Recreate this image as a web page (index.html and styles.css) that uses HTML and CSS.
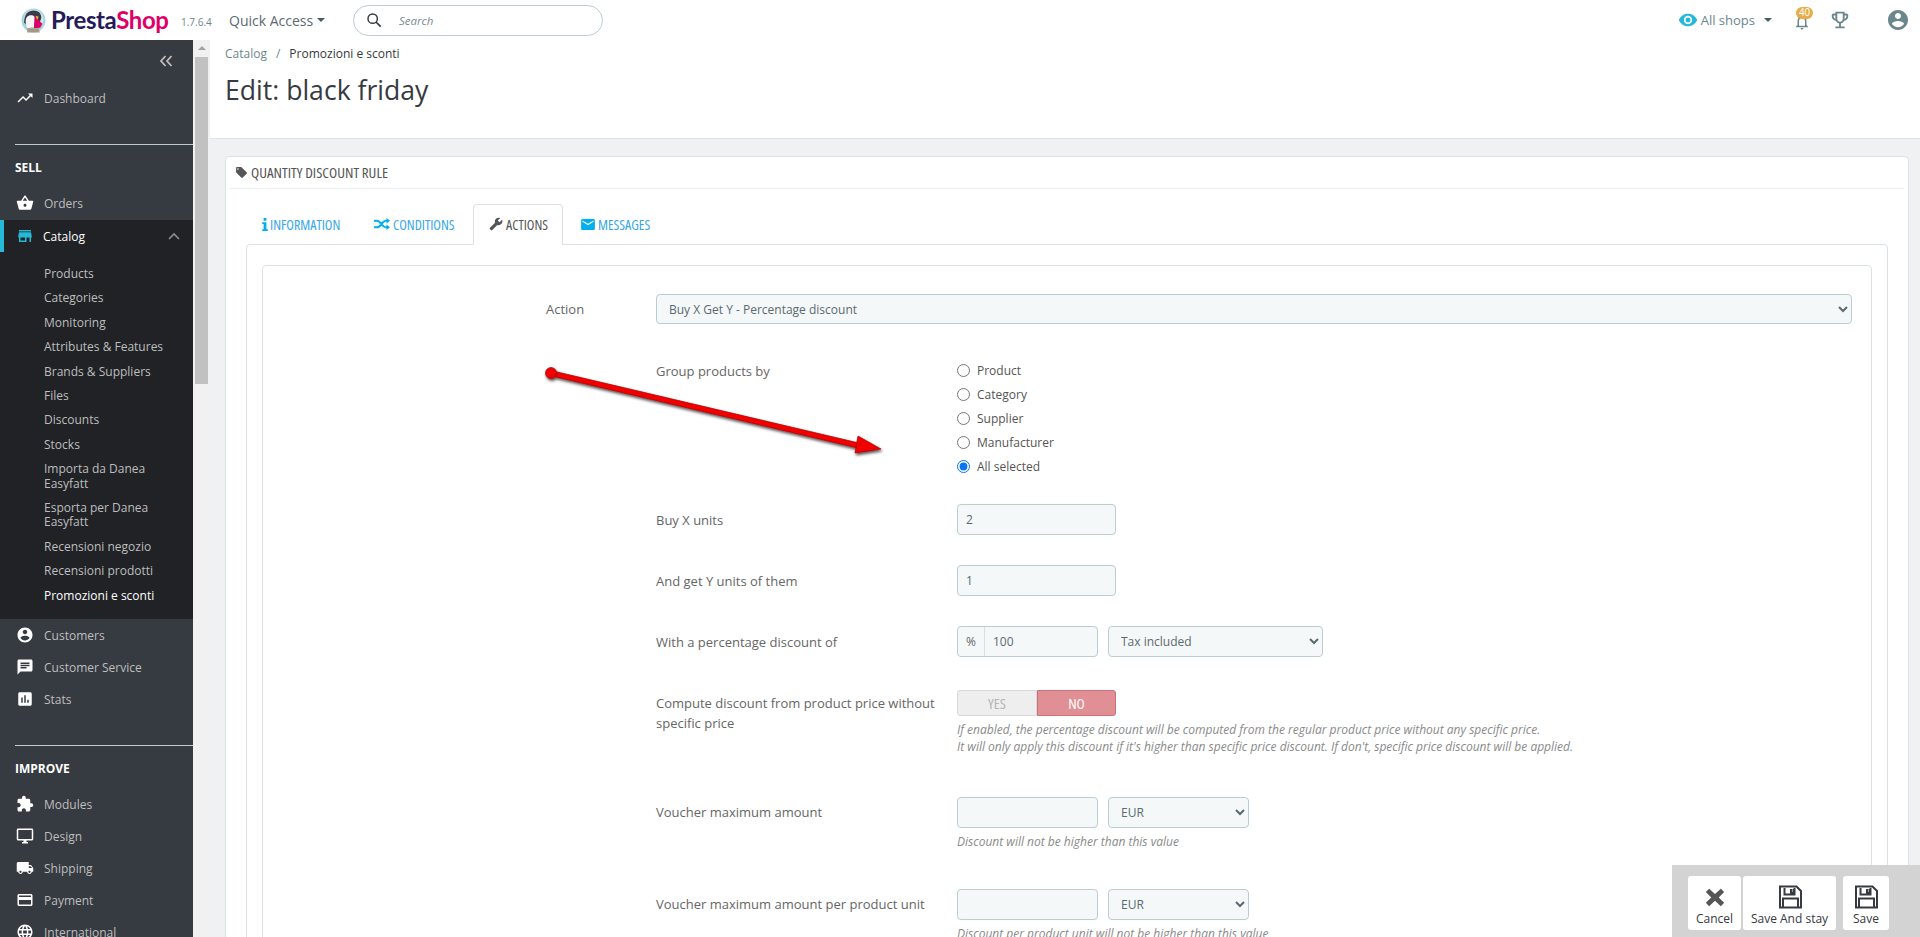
FILE: index.html
```html
<!DOCTYPE html>
<html lang="en">
<head>
    <meta charset="UTF-8">
    <meta name="viewport" content="width=device-width, initial-scale=1.0">
    <title>Edit: black friday</title>
    <link rel="stylesheet" href="styles.css">
</head>
<body>

<header class="topbar">
    <div class="logo">
        <svg class="logo-bird" viewBox="0 0 24 24">
            <circle cx="12" cy="12" r="11.500" fill="#a3d6e2"/>
            <circle cx="12" cy="11" r="9.500" fill="#d3e8ec"/>
            <path d="M3 14C3 6 7 2.500 12 2.500c5 0 7.500 3 7.500 7l-3 8-9 2z" fill="#3a3b48"/>
            <path d="M4.500 13c0-4 2-6 5-6 3 0 4.500 2 4 4.500l-1 7-6 1c-1.500-2-2-4-2-6.500z" fill="#f6f6f6"/>
            <path d="M13 8l7.500 7-2 4-6 .500z" fill="#df0067"/>
            <path d="M14 7.500l3 1-1.500 3z" fill="#f5b335"/>
            <path d="M6 19.500h11l1 4H6z" fill="#a39a84"/>
        </svg>
        <span class="logo-name"><span class="logo-presta">Presta</span><span class="logo-shop">Shop</span></span>
    </div>
    <span class="version">1.7.6.4</span>
    <span class="quick-access">Quick Access<i class="caret"></i></span>
    <div class="search">
        <svg class="search-icon" viewBox="0 0 24 24"><circle cx="10" cy="10" r="7" fill="none" stroke="#363a41" stroke-width="2.2"/><path d="M15 15l7 7" stroke="#363a41" stroke-width="2.6"/></svg>
        <span class="search-text">Search</span>
    </div>
    <div class="topbar-right">
        <svg class="eye" viewBox="0 0 24 24"><path d="M12 4.5C7 4.5 2.73 7.61 1 12c1.73 4.39 6 7.5 11 7.5s9.27-3.11 11-7.5c-1.73-4.39-6-7.5-11-7.5zM12 17c-2.76 0-5-2.24-5-5s2.24-5 5-5 5 2.24 5 5-2.24 5-5 5zm0-8c-1.66 0-3 1.34-3 3s1.34 3 3 3 3-1.34 3-3-1.34-3-3-3z"/></svg>
        <span class="shops">All shops</span>
        <i class="caret caret-shops"></i>
        <div class="bell">
            <svg viewBox="0 0 24 24"><path d="M12 22c1.1 0 2-.9 2-2h-4c0 1.1.9 2 2 2zm6-6v-5c0-3.07-1.63-5.64-4.5-6.32V4c0-.83-.67-1.5-1.5-1.5s-1.5.67-1.5 1.5v.68C7.64 5.36 6 7.92 6 11v5l-2 2v1h16v-1l-2-2zm-2 1H8v-6c0-2.48 1.51-4.5 4-4.5s4 2.02 4 4.5v6z"/></svg>
            <span class="badge">40</span>
        </div>
        <svg class="trophy" viewBox="0 0 24 24"><path d="M19 5h-2V3H7v2H5c-1.1 0-2 .9-2 2v1c0 2.55 1.92 4.63 4.39 4.94.63 1.5 1.98 2.63 3.61 2.96V19H7v2h10v-2h-4v-3.1c1.63-.33 2.98-1.46 3.61-2.96C19.08 12.63 21 10.55 21 8V7c0-1.1-.9-2-2-2zM5 8V7h2v3.82C5.84 10.4 5 9.3 5 8zm7 6c-1.65 0-3-1.35-3-3V5h6v6c0 1.65-1.35 3-3 3zm7-6c0 1.3-.84 2.4-2 2.82V7h2v1z"/></svg>
        <svg class="user" viewBox="2 2 20 20"><path d="M12 2C6.48 2 2 6.48 2 12s4.48 10 10 10 10-4.48 10-10S17.52 2 12 2zm0 3c1.66 0 3 1.34 3 3s-1.34 3-3 3-3-1.34-3-3 1.34-3 3-3zm0 14.2c-2.5 0-4.71-1.28-6-3.22.03-1.99 4-3.08 6-3.08 1.99 0 5.97 1.09 6 3.08-1.29 1.94-3.5 3.22-6 3.22z"/></svg>
    </div>
</header>

<div class="app">
    <nav class="sidebar">
        <div class="collapse">
            <svg viewBox="0 0 14 12"><path d="M6.500 1L2 6l4.500 5M12.500 1L8 6l4.500 5" fill="none" stroke="#bebebe" stroke-width="1.800"/></svg>
        </div>
        <a class="nav-item nav-dashboard">
            <svg viewBox="0 0 24 24"><path d="M16 6l2.29 2.29-4.88 4.88-4-4L2 16.59 3.41 18l6-6 4 4 6.3-6.29L22 12V6z"/></svg>
            Dashboard
        </a>
        <div class="nav-title">SELL</div>
        <a class="nav-item">
            <svg viewBox="0 0 24 24"><path d="M17.21 9l-4.38-6.56c-.19-.28-.51-.42-.83-.42-.32 0-.64.14-.83.43L6.79 9H2c-.55 0-1 .45-1 1 0 .09.01.18.04.27l2.54 9.27c.23.84 1 1.46 1.92 1.46h13c.92 0 1.69-.62 1.93-1.46l2.54-9.27L23 10c0-.55-.45-1-1-1h-4.79zM9 9l3-4.4L15 9H9zm3 8c-1.1 0-2-.9-2-2s.9-2 2-2 2 .9 2 2-.9 2-2 2z"/></svg>
            Orders
        </a>
        <div class="nav-open">
            <a class="nav-item nav-active">
                <svg viewBox="0 0 24 24"><path d="M20 4H4v2h16V4zm1 10v-2l-1-5H4l-1 5v2h1v6h10v-6h4v6h2v-6h1zm-9 4H6v-4h6v4z"/></svg>
                Catalog
                <svg class="nav-chevron" viewBox="0 0 12 8"><path d="M1 7l5-5 5 5" fill="none" stroke="#8a8d92" stroke-width="1.6"/></svg>
            </a>
            <ul class="submenu">
                <li>Products</li>
                <li>Categories</li>
                <li>Monitoring</li>
                <li>Attributes &amp; Features</li>
                <li>Brands &amp; Suppliers</li>
                <li>Files</li>
                <li>Discounts</li>
                <li>Stocks</li>
                <li>Importa da Danea Easyfatt</li>
                <li>Esporta per Danea Easyfatt</li>
                <li>Recensioni negozio</li>
                <li>Recensioni prodotti</li>
                <li class="current">Promozioni e sconti</li>
            </ul>
        </div>
        <a class="nav-item">
            <svg viewBox="0 0 24 24"><path d="M12 2C6.48 2 2 6.48 2 12s4.48 10 10 10 10-4.48 10-10S17.52 2 12 2zm0 3c1.66 0 3 1.34 3 3s-1.34 3-3 3-3-1.34-3-3 1.34-3 3-3zm0 14.2c-2.5 0-4.71-1.28-6-3.22.03-1.99 4-3.08 6-3.08 1.99 0 5.97 1.09 6 3.08-1.29 1.94-3.5 3.22-6 3.22z"/></svg>
            Customers
        </a>
        <a class="nav-item">
            <svg viewBox="0 0 24 24"><path d="M20 2H4c-1.1 0-1.99.9-1.99 2L2 22l4-4h14c1.1 0 2-.9 2-2V4c0-1.1-.9-2-2-2zM6 9h12v2H6V9zm8 5H6v-2h8v2zm4-6H6V6h12v2z"/></svg>
            Customer Service
        </a>
        <a class="nav-item">
            <svg viewBox="0 0 24 24"><path d="M19 3H5c-1.1 0-2 .9-2 2v14c0 1.1.9 2 2 2h14c1.1 0 2-.9 2-2V5c0-1.1-.9-2-2-2zM9 17H7v-7h2v7zm4 0h-2V7h2v10zm4 0h-2v-4h2v4z"/></svg>
            Stats
        </a>
        <div class="nav-title nav-title-second">IMPROVE</div>
        <a class="nav-item">
            <svg viewBox="0 0 24 24"><path d="M20.5 11H19V7c0-1.1-.9-2-2-2h-4V3.5C13 2.12 11.88 1 10.5 1S8 2.12 8 3.5V5H4c-1.1 0-1.99.9-1.99 2v3.8H3.5c1.49 0 2.7 1.21 2.7 2.7s-1.21 2.7-2.7 2.7H2V20c0 1.1.9 2 2 2h3.8v-1.5c0-1.49 1.21-2.7 2.7-2.7 1.49 0 2.7 1.21 2.7 2.7V22H17c1.1 0 2-.9 2-2v-4h1.5c1.38 0 2.5-1.12 2.5-2.5S21.88 11 20.5 11z"/></svg>
            Modules
        </a>
        <a class="nav-item">
            <svg viewBox="0 0 24 24"><path d="M21 2H3c-1.1 0-2 .9-2 2v12c0 1.1.9 2 2 2h7v2H8v2h8v-2h-2v-2h7c1.1 0 2-.9 2-2V4c0-1.1-.9-2-2-2zm0 14H3V4h18v12z"/></svg>
            Design
        </a>
        <a class="nav-item">
            <svg viewBox="0 0 24 24"><path d="M20 8h-3V4H3c-1.1 0-2 .9-2 2v11h2c0 1.66 1.34 3 3 3s3-1.34 3-3h6c0 1.66 1.34 3 3 3s3-1.34 3-3h2v-5l-3-4zM6 18.5c-.83 0-1.5-.67-1.5-1.5s.67-1.5 1.5-1.5 1.5.67 1.5 1.5-.67 1.5-1.5 1.5zm13.5-9l1.96 2.5H17V9.5h2.5zm-1.5 9c-.83 0-1.5-.67-1.5-1.5s.67-1.5 1.5-1.5 1.5.67 1.5 1.5-.67 1.5-1.5 1.5z"/></svg>
            Shipping
        </a>
        <a class="nav-item">
            <svg viewBox="0 0 24 24"><path d="M20 4H4c-1.11 0-1.99.89-1.99 2L2 18c0 1.11.89 2 2 2h16c1.11 0 2-.89 2-2V6c0-1.11-.89-2-2-2zm0 14H4v-6h16v6zm0-10H4V6h16v2z"/></svg>
            Payment
        </a>
        <a class="nav-item">
            <svg viewBox="0 0 24 24"><path d="M11.99 2C6.47 2 2 6.48 2 12s4.47 10 9.99 10C17.52 22 22 17.52 22 12S17.52 2 11.99 2zm6.93 6h-2.95c-.32-1.25-.78-2.45-1.38-3.56 1.84.63 3.37 1.91 4.33 3.56zM12 4.04c.83 1.2 1.48 2.53 1.91 3.96h-3.82c.43-1.43 1.08-2.76 1.91-3.96zM4.26 14C4.1 13.36 4 12.69 4 12s.1-1.36.26-2h3.38c-.08.66-.14 1.32-.14 2 0 .68.06 1.34.14 2H4.26zm.82 2h2.95c.32 1.25.78 2.45 1.38 3.56-1.84-.63-3.37-1.9-4.33-3.56zm2.95-8H5.08c.96-1.66 2.49-2.93 4.33-3.56C8.81 5.55 8.35 6.75 8.03 8zM12 19.96c-.83-1.2-1.48-2.53-1.91-3.96h3.82c-.43 1.43-1.08 2.76-1.91 3.96zM14.34 14H9.66c-.09-.66-.16-1.32-.16-2 0-.68.07-1.35.16-2h4.68c.09.65.16 1.32.16 2 0 .68-.07 1.34-.16 2zm.25 5.56c.6-1.11 1.06-2.31 1.38-3.56h2.95c-.96 1.65-2.49 2.93-4.33 3.56zM16.36 14c.08-.66.14-1.32.14-2 0-.68-.06-1.34-.14-2h3.38c.16.64.26 1.31.26 2s-.1 1.36-.26 2h-3.38z"/></svg>
            International
        </a>
    </nav>

    <div class="scroll-track">
        <i class="scroll-arrow"></i>
        <div class="scroll-thumb"></div>
    </div>

    <main class="content">
        <div class="page-head">
            <div class="breadcrumb"><span class="crumb">Catalog</span><span class="crumb-sep">/</span><span>Promozioni e sconti</span></div>
            <h1>Edit: black friday</h1>
        </div>

        <section class="card">
            <div class="card-head">
                <svg viewBox="0 0 24 24"><path d="M21.41 11.58l-9-9C12.05 2.22 11.55 2 11 2H4c-1.1 0-2 .9-2 2v7c0 .55.22 1.05.59 1.42l9 9c.36.36.86.58 1.41.58.55 0 1.05-.22 1.41-.59l7-7c.37-.36.59-.86.59-1.41 0-.55-.23-1.06-.59-1.42zM5.5 7C4.67 7 4 6.33 4 5.5S4.67 4 5.5 4 7 4.67 7 5.5 6.33 7 5.5 7z"/></svg>
                QUANTITY DISCOUNT RULE
            </div>

            <div class="tabs">
                <a class="tab tab-info">
                    <svg viewBox="0 0 6 14"><path d="M1.5 0h3v3h-3zM0 4.500h4.500V12H6v2H0v-2h1.500V6.500H0z"/></svg>
                    INFORMATION
                </a>
                <a class="tab tab-cond">
                    <svg viewBox="0 0 16 12"><path d="M0 2.700h3c4 0 5 6.600 8.500 6.600H13M0 9.300h3c4 0 5-6.600 8.500-6.600H13" fill="none" stroke="#00aff0" stroke-width="2"/><path d="M12.500 0L16 2.700l-3.500 2.700zM12.500 6.600L16 9.300 12.500 12z"/></svg>
                    CONDITIONS
                </a>
                <a class="tab tab-active">
                    <svg viewBox="0 0 24 24"><path transform="matrix(-1 0 0 1 24 0)" d="M22.7 19l-9.100-9.100c.9-2.300.4-5-1.500-6.900-2-2-5-2.400-7.400-1.300L9 6 6 9 1.600 4.700C.4 7.100.9 10.100 2.900 12.100c1.900 1.900 4.600 2.400 6.900 1.500l9.100 9.100c.4.4 1 .4 1.400 0l2.300-2.300c.5-.4.5-1.100.1-1.400z"/></svg>
                    ACTIONS
                </a>
                <a class="tab tab-msg">
                    <svg viewBox="2 4 20 16"><path d="M20 4H4c-1.100 0-1.990.9-1.990 2L2 18c0 1.100.9 2 2 2h16c1.100 0 2-.9 2-2V6c0-1.100-.9-2-2-2zm0 4l-8 5-8-5V6l8 5 8-5v2z"/></svg>
                    MESSAGES
                </a>
            </div>

            <div class="tab-panel">
                <div class="form-panel">
                    <div class="action-row">
                        <label class="action-label">Action</label>
                        <select class="control select-wide"><option>Buy X Get Y - Percentage discount</option></select>
                    </div>

                    <div class="form-row row-group">
                        <label>Group products by</label>
                        <div class="radios">
                            <label class="radio"><input type="radio" name="group"> Product</label>
                            <label class="radio"><input type="radio" name="group"> Category</label>
                            <label class="radio"><input type="radio" name="group"> Supplier</label>
                            <label class="radio"><input type="radio" name="group"> Manufacturer</label>
                            <label class="radio"><input type="radio" name="group" checked> All selected</label>
                        </div>
                    </div>

                    <div class="form-row row-buy">
                        <label>Buy X units</label>
                        <input class="control input-units" type="text" value="2">
                    </div>

                    <div class="form-row row-next">
                        <label>And get Y units of them</label>
                        <input class="control input-units" type="text" value="1">
                    </div>

                    <div class="form-row row-next">
                        <label>With a percentage discount of</label>
                        <div class="inline">
                            <div class="input-group">
                                <span class="addon">%</span>
                                <input type="text" value="100">
                            </div>
                            <select class="control select-tax"><option>Tax included</option></select>
                        </div>
                    </div>

                    <div class="form-row row-compute">
                        <label>Compute discount from product price without specific price</label>
                        <div>
                            <div class="toggle">
                                <span class="toggle-yes">YES</span>
                                <span class="toggle-no">NO</span>
                            </div>
                            <p class="help help-compute">If enabled, the percentage discount will be computed from the regular product price without any specific price.<br>It will only apply this discount if it's higher than specific price discount. If don't, specific price discount will be applied.</p>
                        </div>
                    </div>

                    <div class="form-row row-voucher">
                        <label>Voucher maximum amount</label>
                        <div>
                            <div class="inline">
                                <input class="control input-amount" type="text">
                                <select class="control select-cur"><option>EUR</option></select>
                            </div>
                            <p class="help">Discount will not be higher than this value</p>
                        </div>
                    </div>

                    <div class="form-row row-voucher-two">
                        <label>Voucher maximum amount per product unit</label>
                        <div>
                            <div class="inline">
                                <input class="control input-amount" type="text">
                                <select class="control select-cur"><option>EUR</option></select>
                            </div>
                            <p class="help">Discount per product unit will not be higher than this value</p>
                        </div>
                    </div>
                </div>
            </div>
        </section>
    </main>
</div>

<svg class="annotation" viewBox="0 0 350 100">
    <defs>
        <filter id="arrowShadow" x="-5%" y="-30%" width="110%" height="170%">
            <feDropShadow dx="1" dy="2" stdDeviation="1.500" flood-color="#000" flood-opacity="0.700"/>
        </filter>
    </defs>
    <g filter="url(#arrowShadow)" fill="#f00000" stroke="#a80000" stroke-width="0.700">
        <path d="M11 5.500L319 78l-1 5L10 10.500z"/>
        <circle cx="11" cy="8" r="5.500"/>
        <path d="M318 71l23 13-26 4z"/>
    </g>
</svg>

<div class="toolbar">
    <a class="tool-btn tool-cancel">
        <svg viewBox="0 0 24 24"><path d="M5 2l7 6.500L19 2l4 4-6.500 6.500L23 19l-4 4-7-6.500L5 23l-4-4 6.500-6.500L1 6z"/></svg>
        Cancel
    </a>
    <a class="tool-btn tool-stay">
        <svg viewBox="0 0 24 24"><path d="M2 1.500h16.500L23 6v16.500H2zM6.500 3v6.500h10V3M5 22v-8.500h15V22M13 4v4h2.500V4" fill="none" stroke="#363a41" stroke-width="2"/></svg>
        Save And stay
    </a>
    <a class="tool-btn tool-save">
        <svg viewBox="0 0 24 24"><path d="M2 1.500h16.500L23 6v16.500H2zM6.500 3v6.500h10V3M5 22v-8.500h15V22M13 4v4h2.500V4" fill="none" stroke="#363a41" stroke-width="2"/></svg>
        Save
    </a>
</div>

</body>
</html>
```

FILE: styles.css
```css
* {
    box-sizing: border-box;
}

html, body {
    height: 100%;
    margin: 0;
    overflow: hidden;
}

body {
    font-family: "Open Sans", sans-serif;
    font-size: 12px;
    color: #363a41;
    background: #eff1f2;
}

/* top bar */

.topbar {
    height: 40px;
    background: #fff;
    display: flex;
    align-items: center;
    padding-left: 21px;
}

.logo {
    display: flex;
    align-items: center;
    width: 160px;
}

.logo-bird {
    width: 25px;
    height: 25px;
    margin-right: 5px;
}

.logo-name {
    font-family: "Lato", sans-serif;
    font-size: 24px;
    font-weight: 700;
    letter-spacing: -0.4px;
    line-height: 40px;
}

.logo-presta {
    color: #251b5b;
}

.logo-shop {
    color: #df0067;
}

.version {
    font-size: 10px;
    color: #6c868e;
    width: 48px;
    margin-top: 3px;
}

.quick-access {
    font-size: 14px;
    color: #5b6a70;
    display: flex;
    align-items: center;
    width: 124px;
}

.caret {
    display: inline-block;
    border-left: 4px solid transparent;
    border-right: 4px solid transparent;
    border-top: 4px solid #4a5a60;
    margin-left: 4px;
}

.search {
    width: 250px;
    height: 31px;
    border: 1px solid #bbcdd2;
    border-radius: 16px;
    display: flex;
    align-items: center;
    padding-left: 12px;
}

.search-icon {
    width: 16px;
    height: 16px;
}

.search-text {
    font-style: italic;
    color: #7a8a90;
    margin-left: 17px;
    font-size: 11.5px;
}

.topbar-right {
    margin-left: auto;
    display: flex;
    align-items: center;
    padding-right: 12px;
}

.eye {
    width: 20px;
    height: 20px;
    fill: #25b9d7;
    margin-right: 3px;
}

.shops {
    font-size: 13px;
    color: #6c868e;
}

.caret-shops {
    margin-left: 9px;
    margin-right: 21px;
}

.bell {
    position: relative;
    width: 18px;
    height: 18px;
    margin-top: 4px;
    margin-right: 18px;
}

.bell svg {
    width: 18px;
    height: 18px;
    fill: #6c868e;
    display: block;
}

.badge {
    position: absolute;
    left: 3px;
    top: -6px;
    width: 17px;
    height: 12px;
    border-radius: 6px;
    background: #e9ac47;
    color: #fff;
    font-family: "Liberation Sans", sans-serif;
    font-size: 10px;
    line-height: 12px;
    text-align: center;
}

.trophy {
    width: 22px;
    height: 22px;
    fill: #6c868e;
    margin-right: 37px;
}

.user {
    width: 20px;
    height: 20px;
    fill: #6c868e;
}

/* layout */

.app {
    display: flex;
    height: calc(100% - 40px);
}

.sidebar {
    width: 193px;
    flex: none;
    background: #363a41;
    color: #bebebe;
    overflow: hidden;
}

.collapse {
    height: 42px;
    display: flex;
    align-items: center;
    justify-content: flex-end;
    padding-right: 20px;
}

.collapse svg {
    width: 14px;
    height: 12px;
}

.nav-item {
    display: flex;
    align-items: center;
    height: 32px;
    padding-left: 16px;
    position: relative;
}

.nav-item svg {
    width: 18px;
    height: 18px;
    fill: #fff;
    margin-right: 10px;
    flex: none;
}

.nav-title {
    margin: 30px 0 0 15px;
    border-top: 1px solid #bbcdd2;
    padding-top: 14px;
    height: 43px;
    font-weight: 700;
    color: #fff;
    line-height: 17px;
}

.nav-title-second {
    margin-top: 30px;
}

.nav-open {
    background: #202226;
    padding-bottom: 11px;
}

.nav-active {
    color: #fff;
    border-left: 4px solid #25b9d7;
    padding-left: 12px;
    margin-top: 1px;
}

.nav-active svg {
    fill: #25b9d7;
    margin-right: 9px;
}

.nav-item .nav-chevron {
    position: absolute;
    right: 4px;
    top: 12px;
    width: 12px;
    height: 8px;
    fill: none;
    margin: 0 9px 0 0;
}

.submenu {
    list-style: none;
    margin: 10px 0 0;
    padding: 0 20px 0 44px;
}

.submenu li {
    padding: 5px 0;
    line-height: 14.4px;
}

.current {
    color: #fff;
}

.scroll-track {
    width: 17px;
    flex: none;
    background: #f1f1f1;
    position: relative;
    padding: 17px 2px 0;
}

.scroll-arrow {
    position: absolute;
    left: 5px;
    top: 6px;
    border-left: 4px solid transparent;
    border-right: 4px solid transparent;
    border-bottom: 4px solid #a3a3a3;
}

.scroll-thumb {
    height: 327px;
    background: #c1c1c1;
}

.content {
    flex: 1;
    min-width: 0;
    overflow: hidden;
}

.page-head {
    height: 99px;
    background: #fff;
    border-bottom: 1px solid #dfe3e5;
    padding: 6px 0 0 15px;
}

.breadcrumb {
    line-height: 16px;
}

.crumb {
    color: #6c868e;
}

.crumb-sep {
    color: #6c868e;
    margin: 0 9px;
}

h1 {
    margin: 10px 0 0;
    font-size: 26.6px;
    font-weight: 400;
    line-height: 36px;
}

/* card */

.card {
    margin: 17px 11px 0 15px;
    background: #fff;
    border: 1px solid #dbe2e5;
    border-bottom: 0;
    border-radius: 5px 5px 0 0;
    padding: 0 20px;
    height: 900px;
}

.card-head {
    height: 32px;
    margin: 0 -16px;
    padding: 0 0 1px 5px;
    border-bottom: 1px solid #eef0f1;
    display: flex;
    align-items: center;
    font-stretch: 79%;
    font-size: 15px;
    color: #555;
}

.card-head svg {
    width: 13px;
    height: 13px;
    fill: #555;
    margin-right: 3px;
}

.tabs {
    display: flex;
    margin-top: 15px;
    margin-bottom: -1px;
    height: 41px;
    position: relative;
    z-index: 1;
}

.tab {
    display: flex;
    align-items: center;
    height: 41px;
    padding-bottom: 2px;
    border: 1px solid transparent;
    border-bottom: 0;
    border-radius: 4px 4px 0 0;
    font-stretch: 78%;
    font-size: 14px;
    color: #35a7ea;
}

.tab svg {
    fill: #00aff0;
    width: 14px;
    height: 14px;
    margin-right: 3px;
}

.tab-info {
    width: 114px;
    padding-left: 15px;
}

.tab-info svg {
    width: 6px;
    height: 13px;
    margin-right: 2px;
}

.tab-cond {
    width: 113px;
    padding-left: 13px;
}

.tab-cond svg {
    width: 16px;
    height: 12px;
}

.tab-active {
    width: 90px;
    padding-left: 15px;
    background: #fff;
    border-color: #dbe2e5;
    color: #555;
}

.tab-active svg {
    fill: #555;
}

.tab-msg {
    padding-left: 17px;
}

.tab-msg svg {
    height: 11px;
}

.tab-panel {
    border: 1px solid #dbe2e5;
    border-radius: 4px;
    padding: 20px 15px 0;
    height: 800px;
}

.form-panel {
    border: 1px solid #dbe2e5;
    border-radius: 4px;
    padding: 28px 19px 0 283px;
    height: 800px;
}

/* form */

.action-row {
    display: flex;
    align-items: center;
}

.action-label {
    width: 110px;
    flex: none;
    color: #666;
    font-size: 13px;
}

.control {
    height: 31px;
    border: 1px solid #bbcdd2;
    border-radius: 4px;
    background-color: #f5f8f9;
    font-family: "Open Sans", sans-serif;
    font-size: 12px;
    color: #5a6a70;
    padding: 0 8px;
}

.select-wide {
    flex: 1;
    min-width: 0;
    height: 30px;
}

.form-row {
    display: grid;
    grid-template-columns: 301px 1fr;
    margin-left: 110px;
    align-items: start;
}

.form-row > label {
    color: #666;
    font-size: 13px;
    line-height: 20px;
}

.row-group {
    margin-top: 34px;
}

.row-group > label {
    padding-top: 3px;
}

.radios {
    display: flex;
    flex-direction: column;
}

.radio {
    height: 24px;
    display: flex;
    align-items: center;
    color: #555;
}

.radio input {
    margin: 0 7px 0 0;
    accent-color: #0a75f0;
    width: 13px;
    height: 13px;
}

.row-buy {
    margin-top: 26px;
    align-items: center;
}

.row-next {
    margin-top: 30px;
    align-items: center;
}

.input-units {
    width: 159px;
}

.inline {
    display: flex;
    gap: 10px;
}

.input-group {
    display: flex;
    width: 141px;
    height: 31px;
    border: 1px solid #bbcdd2;
    border-radius: 4px;
    background: #f5f8f9;
    overflow: hidden;
}

.addon {
    width: 27px;
    border-right: 1px solid #d5e0e3;
    display: flex;
    align-items: center;
    justify-content: center;
    color: #666;
}

.input-group input {
    flex: 1;
    min-width: 0;
    border: 0;
    background: none;
    padding: 0 8px;
    font-family: "Open Sans", sans-serif;
    font-size: 12px;
    color: #5a6a70;
}

.select-tax {
    width: 215px;
}

.select-cur {
    width: 141px;
}

.input-amount {
    width: 141px;
}

.row-compute {
    margin-top: 33px;
}

.row-compute > label {
    padding-top: 3px;
}

.toggle {
    display: flex;
    width: 159px;
    height: 26px;
    font-stretch: 80%;
    font-size: 15px;
    line-height: 24px;
    text-align: center;
}

.toggle-yes {
    width: 80px;
    background: #eee;
    border: 1px solid #d9d9d9;
    border-radius: 3px 0 0 3px;
    color: #b5b5b5;
}

.toggle-no {
    width: 79px;
    background: #e08f95;
    border: 1px solid #cf7078;
    border-radius: 0 3px 3px 0;
    color: #fff;
}

.help {
    margin: 5px 0 0;
    font-size: 12px;
    font-style: italic;
    line-height: 17px;
    color: #8a8a8a;
    white-space: nowrap;
}

.row-voucher {
    margin-top: 42px;
}

.row-voucher > label,
.row-voucher-two > label {
    line-height: 31px;
}

.row-voucher-two {
    margin-top: 39px;
}

/* arrow drawn over the form */

.annotation {
    position: absolute;
    left: 540px;
    top: 365px;
    width: 350px;
    height: 100px;
}

/* bottom toolbar */

.toolbar {
    position: fixed;
    right: 0;
    bottom: 0;
    width: 248px;
    height: 72px;
    background: #d3d3d3;
    display: flex;
    justify-content: flex-end;
    padding: 11px 31px 0 0;
    gap: 2px;
}

.tool-btn {
    height: 54px;
    background: #fff;
    border-radius: 3px;
    display: flex;
    flex-direction: column;
    align-items: center;
    font-size: 12px;
    color: #363a41;
    padding-top: 9px;
}

.tool-btn svg {
    width: 24px;
    height: 24px;
    margin-bottom: 1px;
}

.tool-cancel {
    width: 53px;
}

.tool-cancel svg {
    fill: #555;
    width: 20px;
    height: 24px;
}

.tool-stay {
    width: 93px;
}

.tool-save {
    width: 46px;
    margin-left: 5px;
}
```
